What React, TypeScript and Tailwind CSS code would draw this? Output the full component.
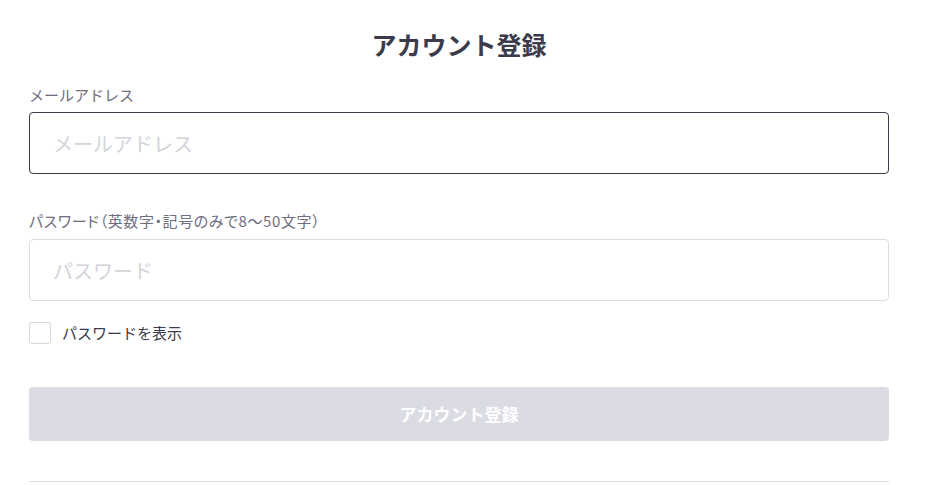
import React, { useState } from 'react';

// Account registration form
export default function App() {
  const [show, setShow] = useState(false);
  return (
    <div
      className="min-h-screen bg-white"
      style={{ fontFamily: '"Noto Sans CJK JP", "Noto Sans", sans-serif' }}
    >
      <div className="w-[860px] ml-[29px] pt-[25px]">
        <h1 className="text-center text-[25px] leading-[38px] font-bold text-[#3b3b4b]">アカウント登録</h1>

        <div className="mt-[22px]">
          <label className="block text-[15px] leading-[20px] text-[#6e6e7e]">メールアドレス</label>
          <input
            type="email"
            placeholder="メールアドレス"
            className="mt-[7px] block w-full h-[62px] rounded-[4px] border border-[#3b3b4b] px-[23px] text-[20px] text-[#3b3b4b] placeholder:text-[#d3d3db] outline-none"
          />
        </div>

        <div className="mt-[37px]">
          <label className="block text-[15px] leading-[20px] tracking-[0.6px] text-[#6e6e7e] [font-feature-settings:'palt']">パスワード（英数字・記号のみで8〜50文字）</label>
          <input
            type={show ? 'text' : 'password'}
            placeholder="パスワード"
            className="mt-[8px] block w-full h-[62px] rounded-[4px] border border-[#dcdce2] px-[23px] text-[20px] text-[#3b3b4b] placeholder:text-[#d3d3db] outline-none"
          />
        </div>

        <label className="mt-[21px] flex items-center gap-[11px] cursor-pointer">
          <span className="w-[22px] h-[22px] rounded-[3px] border border-[#d6d6dc] bg-white flex items-center justify-center">
            <input type="checkbox" className="hidden" checked={show} onChange={(e) => setShow(e.target.checked)} />
          </span>
          <span className="text-[15px] leading-[22px] text-[#3b3b4b]">パスワードを表示</span>
        </label>

        <button
          type="button"
          disabled
          className="mt-[43px] w-full h-[54px] rounded-[4px] bg-[#dbdbe3] text-white text-[17px] font-bold"
        >
          アカウント登録
        </button>

        <div className="mt-[40px] border-t border-[#dcdce2]" />
      </div>
    </div>
  );
}
